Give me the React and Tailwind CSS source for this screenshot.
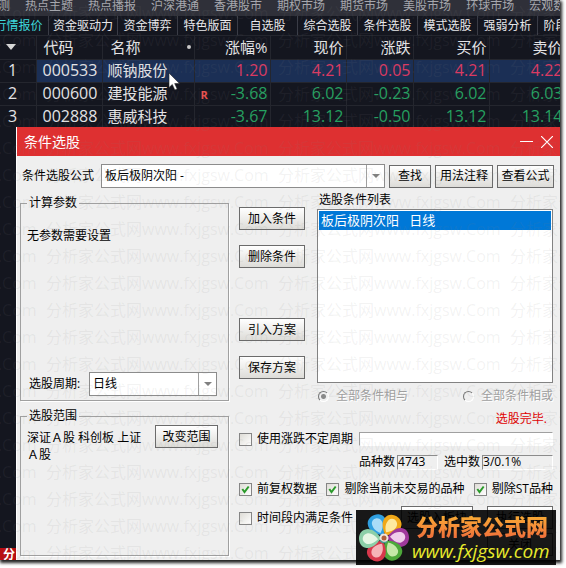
import React, { useState } from "react";
import clsx from "clsx";

const MARKETS = [
  "测",
  "热点主题",
  "热点播报",
  "沪深港通",
  "香港股市",
  "期权市场",
  "期货市场",
  "美股市场",
  "环球市场",
  "宏观数据"
];

const TABS = [
  "行情报价",
  "资金驱动力",
  "资金博弈",
  "特色版面",
  "自选股",
  "综合选股",
  "条件选股",
  "模式选股",
  "强弱分析",
  "阶段排行"
];

const STOCKS = [
  { code: "000533", name: "顺钠股份", values: ["1.20", "4.21", "0.05", "4.21", "4.22"], up: true },
  { code: "000600", name: "建投能源", values: ["-3.68", "6.02", "-0.23", "6.02", "6.03"], tag: "R" },
  { code: "002888", name: "惠威科技", values: ["-3.67", "13.12", "-0.50", "13.12", "13.14"] }
];

const PETALS = [
  { angle: -25, outer: "#2f9fe0", inner: "#a9dcf8" },
  { angle: 30, outer: "#f0a818", inner: "#fde9a0" },
  { angle: 88, outer: "#a0389c", inner: "#f0cdea" },
  { angle: 147, outer: "#4da83a", inner: "#c5e8a8" },
  { angle: 208, outer: "#d8384c", inner: "#f6b4b8" },
  { angle: 268, outer: "#8ccfa8", inner: "#e6f6e4" }
];

const Watermark = () => (
  <div
    aria-hidden="true"
    className="pointer-events-none absolute inset-0 select-none overflow-hidden text-base leading-[27px] text-[#808080]/10"
  >
    {Array.from({ length: 21 }, (_, row) => (
      <div key={row} className="-ml-[186px] flex h-[27px]">
        {Array.from({ length: 4 }, (__, col) => (
          <span key={col} className="w-[232px] shrink-0 whitespace-nowrap">
            分析家公式网www.fxjgsw.Com
          </span>
        ))}
      </div>
    ))}
  </div>
);

const Button = ({ className, children }) => (
  <button
    type="button"
    className={clsx(
      "h-[23px] shrink-0 whitespace-nowrap border border-[#6b6b6b] bg-linear-to-b from-white to-[#dddcd8] text-center leading-[20px]",
      className
    )}
  >
    {children}
  </button>
);

const Select = ({ id, className, options }) => (
  <div className={clsx("relative h-6 border border-[#8c8c8c] bg-white", className)}>
    <select id={id} className="h-full w-full appearance-none bg-transparent pl-[3px] pr-5 leading-[22px] outline-none">
      {options.map((option) => (
        <option key={option}>{option}</option>
      ))}
    </select>
    <span className="pointer-events-none absolute inset-y-0 right-0 flex w-[18px] items-center justify-center border-l border-[#a0a0a0]">
      <svg width="8" height="4" viewBox="0 0 8 4">
        <path d="M0 0h8L4 4z" fill="#808080" />
      </svg>
    </span>
  </div>
);

const Checkbox = ({ label, defaultChecked }) => {
  const [checked, setChecked] = useState(Boolean(defaultChecked));
  return (
    <label className="flex items-center gap-[5px] whitespace-nowrap">
      <span className="relative block size-[13px] shrink-0">
        <input
          type="checkbox"
          checked={checked}
          onChange={(e) => setChecked(e.target.checked)}
          className="block size-[13px] appearance-none border border-[#858585] bg-linear-to-br from-[#dedcd6] to-white"
        />
        {checked && (
          <svg className="pointer-events-none absolute inset-0" width="13" height="13" viewBox="0 0 13 13">
            <path d="M3.3 6l2.2 3 4.2-5.5" fill="none" stroke="#2a9a2a" strokeWidth="2" />
          </svg>
        )}
      </span>
      {label}
    </label>
  );
};

const DisabledRadio = ({ label, defaultChecked }) => (
  <label className="flex items-center gap-[7px] whitespace-nowrap text-[#a0a0a0] [text-shadow:1px_1px_0_#fff]">
    <input
      type="radio"
      name="relation"
      disabled
      defaultChecked={defaultChecked}
      className="size-[11px] appearance-none rounded-full border border-t-[#777] border-l-[#777] border-r-white border-b-white bg-[#efefef] checked:bg-[radial-gradient(#8a8a8a_2px,transparent_3px)]"
    />
    {label}
  </label>
);

const Group = ({ title, className, children }) => (
  <fieldset className={clsx("min-w-0 border border-[#a0a0a0] px-1.5 shadow-[1px_1px_0_#fff]", className)}>
    <legend className="h-[18px] px-0.5 leading-[18px]">{title}</legend>
    {children}
  </fieldset>
);

const QuoteTable = () => (
  <table className="w-[565px] table-fixed border-collapse text-[15px] leading-[20px] text-[#e4e4e6]">
    <colgroup>
      <col className="w-9" />
      <col className="w-[66px]" />
      <col className="w-[92px]" />
      <col className="w-[76px]" />
      <col className="w-[76px]" />
      <col className="w-[67px]" />
      <col className="w-[76px]" />
      <col className="w-[76px]" />
    </colgroup>
    <thead>
      <tr className="h-[23px] [&>th]:border-r [&>th]:border-[#24262e] [&>th]:p-0 [&>th]:font-normal">
        <th>
          <svg className="ml-1.5" width="10" height="6" viewBox="0 0 10 6">
            <path d="M0 0h10L5 6z" fill="#d8d8d8" />
          </svg>
        </th>
        <th className="text-left">
          <span className="pl-[7px]">代码</span>
        </th>
        <th>
          <span className="flex items-center justify-between pl-2 pr-[3px]">
            名称
            <i className="size-1 rounded-full bg-[#c8c8c8]" />
          </span>
        </th>
        {["涨幅%", "现价", "涨跌", "买价", "卖价"].map((title) => (
          <th key={title} className="text-right">
            <span className="pr-0.5">{title}</span>
          </th>
        ))}
      </tr>
    </thead>
    <tbody>
      {STOCKS.map((stock, index) => (
        <tr
          key={stock.code}
          className="h-[23px] [&>td]:border-r [&>td]:border-t [&>td]:border-[#24262e] [&>td]:p-0 [&>td]:align-top"
        >
          <td className="text-base leading-[20px]">
            <span className="pl-2">{index + 1}</span>
          </td>
          <td className={clsx("text-base leading-[20px]", index === 0 && "bg-[#1b2f55]")}>
            <span className="pl-1.5">{stock.code}</span>
          </td>
          <td className={clsx(index === 0 && "bg-[#1b2f55]")}>
            <span className="pl-[5px]">{stock.name}</span>
          </td>
          {stock.values.map((value, i) => (
            <td
              key={i}
              className={clsx(
                "text-right text-base leading-[20px]",
                index === 0 && "bg-[#1b2f55]",
                stock.up ? "text-[#dc3a62]" : "text-[#25a060]"
              )}
            >
              <span className={clsx("flex items-center pr-0.5", i === 0 && stock.tag ? "justify-between" : "justify-end")}>
                {i === 0 && stock.tag && (
                  <b className="pl-1.5 pt-1 text-[11px] leading-3 text-[#e8504e]">{stock.tag}</b>
                )}
                {value}
              </span>
            </td>
          ))}
        </tr>
      ))}
    </tbody>
  </table>
);

const Logo = () => (
  <div className="absolute bottom-[3px] right-2.5 flex h-[55px] w-[200px] items-center bg-black/90">
    <svg className="ml-0.5 shrink-0" width="52" height="52" viewBox="-26 -26 52 52">
      {PETALS.map((petal) => (
        <g key={petal.angle} transform={`rotate(${petal.angle})`}>
          <path d="M0 -3C-6 -7 -11 -13 -9 -19C-7 -27 7 -27 9 -19C11 -13 6 -7 0 -3Z" fill={petal.outer} />
          <path d="M-1 -6C-5 -10 -6 -14 -5 -18C-3 -23 4 -22 5 -17C6 -13 3 -9 -1 -6Z" fill={petal.inner} />
        </g>
      ))}
      <circle r="4.5" fill="#eee6dc" />
      <circle r="2.5" fill="#b0603c" />
      <path d="M-4 2A4.5 4.5 0 0 0 3 3.5" fill="none" stroke="#4a9a90" strokeWidth="1.5" />
    </svg>
    <div className="ml-1.5 whitespace-nowrap">
      <p className="bg-linear-to-b from-[#f9b233] to-[#ee6b3a] bg-clip-text text-[22px] font-black leading-[26px] text-transparent">
        分析家公式网
      </p>
      <p className="-ml-1 font-['Open_Sans'] text-[19px] font-medium italic leading-[24px] text-[#e8ea2c]">
        www.fxjgsw.com
      </p>
    </div>
  </div>
);

const PickerDialog = () => (
  <section className="flex min-w-0 flex-1 flex-col border-l border-white bg-[#efefef] text-black">
    <header className="flex h-[29px] items-center justify-between bg-[#de3031] pl-[7px] pr-[7px] text-white">
      <h1 className="text-sm leading-[29px]">条件选股</h1>
      <div className="flex items-center gap-2">
        <button type="button" aria-label="最小化">
          <svg width="13" height="13" viewBox="0 0 13 13">
            <path d="M0 6.5h13" stroke="#fff" />
          </svg>
        </button>
        <button type="button" aria-label="关闭窗口">
          <svg width="12" height="12" viewBox="0 0 12 12">
            <path d="M0 0l12 12M12 0L0 12" stroke="#fff" strokeWidth="1.2" />
          </svg>
        </button>
      </div>
    </header>

    <div className="flex items-center pl-[5px] pr-1.5 pt-2">
      <label htmlFor="formula" className="w-[79px] shrink-0">
        条件选股公式
      </label>
      <Select id="formula" className="mr-1 min-w-0 flex-1" options={["板后极阴次阳 -"]} />
      <div className="flex gap-1">
        <Button className="w-[42px]">查找</Button>
        <Button className="w-[58px]">用法注释</Button>
        <Button className="w-[57px]">查看公式</Button>
      </div>
    </div>

    <div className="flex flex-1 gap-2.5 pb-1 pl-[3px] pr-[7px] pt-1.5">
      <div className="flex w-[209px] shrink-0 flex-col gap-1.5">
        <Group title="计算参数">
          <div className="flex h-[188px] flex-col justify-between pb-1">
            <p className="pt-4">无参数需要设置</p>
            <div className="flex items-center pl-0.5">
              <label htmlFor="period" className="w-[60px] shrink-0 whitespace-nowrap">
                选股周期:
              </label>
              <Select id="period" className="w-[128px]" options={["日线"]} />
            </div>
          </div>
        </Group>
        <Group title="选股范围" className="flex-1">
          <div className="flex items-start justify-between pr-1">
            <p className="w-[122px] pt-1 leading-[17px]">深证Ａ股 科创板 上证Ａ股</p>
            <Button className="w-[63px]">改变范围</Button>
          </div>
        </Group>
      </div>

      <div className="min-w-0 flex-1">
        <div className="flex gap-3">
          <div className="flex w-[66px] shrink-0 flex-col justify-between pb-1 pt-[13px]">
            <div className="flex flex-col gap-[15px]">
              <Button>加入条件</Button>
              <Button>删除条件</Button>
            </div>
            <div className="flex flex-col gap-[15px]">
              <Button>引入方案</Button>
              <Button>保存方案</Button>
            </div>
          </div>
          <div className="min-w-0 flex-1">
            <h2 id="conditions" className="h-[15px] pl-0.5 leading-3">
              选股条件列表
            </h2>
            <ul
              role="listbox"
              aria-labelledby="conditions"
              className="h-[174px] border border-[#828282] bg-white p-px text-[13px]"
            >
              <li
                role="option"
                aria-selected="true"
                className="h-[19px] whitespace-pre bg-[#0078d7] pl-0.5 leading-[19px] text-white"
              >
                {"板后极阴次阳   日线"}
              </li>
            </ul>
          </div>
        </div>

        <div className="ml-[79px] flex h-[26px] items-center justify-between">
          <DisabledRadio label="全部条件相与" defaultChecked />
          <DisabledRadio label="全部条件相或" />
        </div>
        <p className="h-5 pr-1.5 text-right leading-5 text-[#e00000]">选股完毕.</p>
        <div className="flex h-5 items-center gap-1.5">
          <Checkbox label="使用涨跌不定周期" />
          <div
            role="progressbar"
            aria-label="选股进度"
            className="h-3.5 flex-1 border border-b-white border-l-[#a0a0a0] border-r-white border-t-[#a0a0a0] bg-white"
          />
        </div>
        <div className="flex h-[26px] items-center gap-0.5 pl-[120px]">
          <label htmlFor="total" className="shrink-0">
            品种数
          </label>
          <input
            id="total"
            readOnly
            value="4743"
            className="h-[15px] w-[41px] border border-b-white border-l-[#8c8c8c] border-r-white border-t-[#8c8c8c] bg-[#efefef] outline-none"
          />
          <label htmlFor="picked" className="ml-1 shrink-0">
            选中数
          </label>
          <input
            id="picked"
            readOnly
            value="3/0.1%"
            className="h-[15px] w-0 flex-1 border border-b-white border-l-[#8c8c8c] border-r-white border-t-[#8c8c8c] bg-[#efefef] outline-none"
          />
        </div>
        <div className="flex h-7 items-center justify-between">
          <Checkbox label="前复权数据" defaultChecked />
          <Checkbox label="剔除当前未交易的品种" defaultChecked />
          <Checkbox label="剔除ST品种" defaultChecked />
        </div>
        <div className="flex items-start pt-[3px]">
          <div className="flex h-6 items-center">
            <Checkbox label="时间段内满足条件" />
          </div>
          <Button className="ml-auto mr-3.5 w-[72px]">选股入板块</Button>
          <div className="flex w-[66px] flex-col gap-1">
            <Button>执行选股</Button>
            <Button>关闭</Button>
          </div>
        </div>
      </div>
    </div>
  </section>
);

const App = () => (
  <div className="relative bg-white pb-2 pr-1.5 font-['Open_Sans','Noto_Sans_CJK_SC',sans-serif] text-xs leading-4">
    <main className="relative overflow-hidden bg-[#14161f] shadow-[1px_2px_3px_1px_#222]">
      <nav className="-ml-0.5 flex h-4 gap-[15px] overflow-hidden whitespace-nowrap bg-[#2f3039] leading-[11px] text-[#a6a7ad]">
        {MARKETS.map((market) => (
          <a key={market} href="#market" className="shrink-0">
            {market}
          </a>
        ))}
      </nav>
      <nav className="-ml-[11px] flex h-5 overflow-hidden whitespace-nowrap border-b border-[#24262e] text-center leading-[20px] text-[#e8e8ea]">
        {TABS.map((tab, i) => (
          <a
            key={tab}
            href="#tab"
            className={clsx(
              "shrink-0 border-r border-[#3a3c46]",
              tab.length === 5 ? "w-[69px]" : "w-[60px]",
              i === 0 && "text-[#3fd9dc]"
            )}
          >
            {tab}
          </a>
        ))}
      </nav>
      <div className="h-[91px] overflow-hidden">
        <QuoteTable />
      </div>
      <div className="flex">
        <div className="flex w-4 shrink-0 items-end overflow-hidden">
          <p className="h-3 w-4 overflow-hidden whitespace-nowrap bg-[#b80d12] pl-[3px] font-bold leading-[14px] text-white">
            分
          </p>
        </div>
        <PickerDialog />
      </div>
      <Watermark />
      <svg className="absolute left-[168px] top-[72px]" width="13" height="19" viewBox="0 0 13 19">
        <path d="M1 1v14.5l3.3-3 2.5 5.5 2.4-1-2.5-5.4h4.8z" fill="#fff" stroke="#222" strokeWidth=".6" />
      </svg>
    </main>
    <Logo />
  </div>
);

export default App;
